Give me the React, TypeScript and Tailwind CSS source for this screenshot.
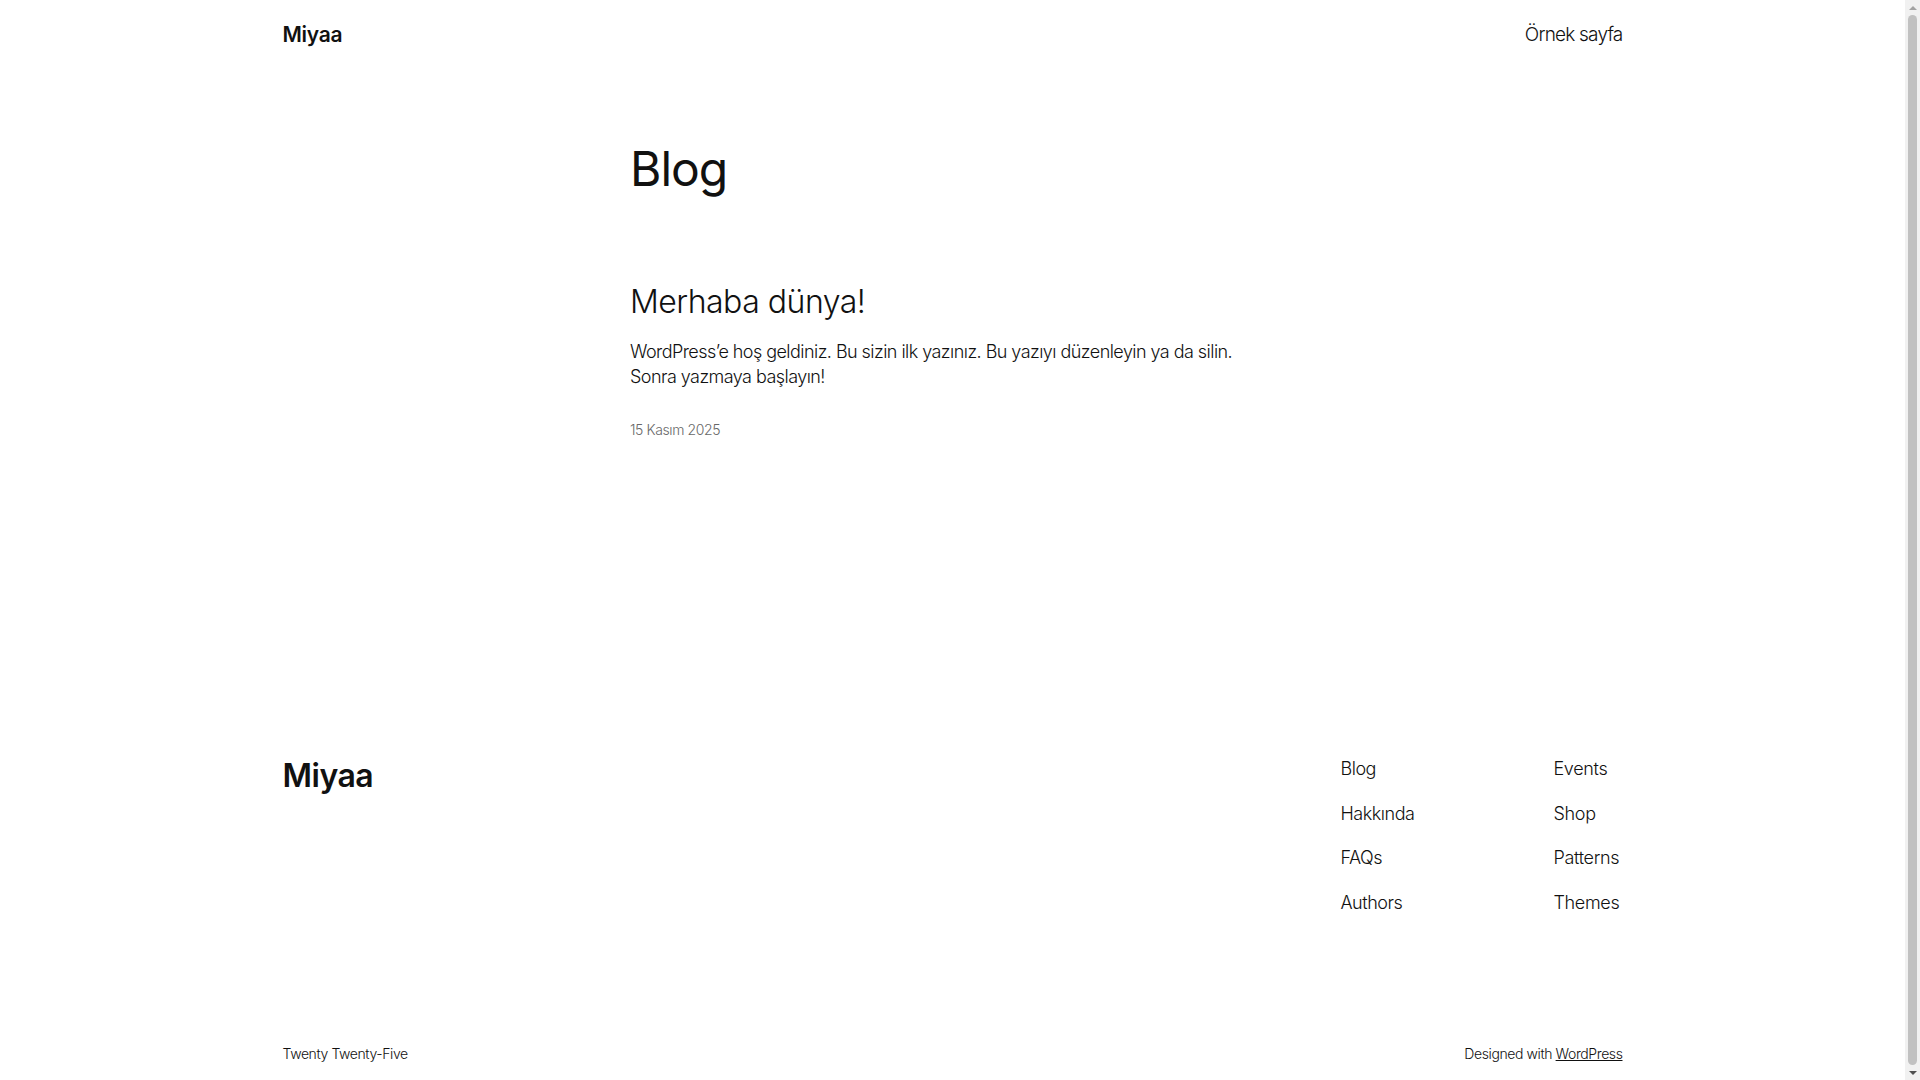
export default function App() {
  const navLeft = ["Blog", "Hakkında", "FAQs", "Authors"];
  const navRight = ["Events", "Shop", "Patterns", "Themes"];

  return (
    <div
      className="min-h-[1110px] w-[1905px] bg-white text-[#111111] flex flex-col"
      style={{ fontFamily: "Inter, 'Noto Sans', sans-serif" }}
    >
      {/* Header */}
      <header className="w-full max-w-[1340px] mx-auto flex items-center justify-between pt-[21px] pb-[19px]">
        <a className="text-[21px] leading-[28px] font-semibold tracking-[-0.3px]">Miyaa</a>
        <nav>
          <a className="text-[19px] leading-[28px] font-light tracking-[-0.8px]">Örnek sayfa</a>
        </nav>
      </header>

      {/* Main */}
      <main className="w-[645px] mx-auto pt-[74px]">
        <h1 className="text-[48px] leading-[54px] font-normal tracking-[-1px]">Blog</h1>

        <article className="mt-[88px]">
          <h2 className="text-[32px] leading-[36px] font-light tracking-[-0.5px]">
            Merhaba dünya!
          </h2>
          <p className="mt-[19px] text-[18px] leading-[25px] font-light tracking-[-0.55px]">
            WordPress’e hoş geldiniz. Bu sizin ilk yazınız. Bu yazıyı düzenleyin ya da silin. Sonra yazmaya başlayın!
          </p>
          <div className="mt-[31px] text-[14px] leading-[20px] font-light text-[#686868] tracking-[-0.4px]">
            15 Kasım 2025
          </div>
        </article>
      </main>

      {/* Footer */}
      <footer className="w-full max-w-[1340px] mx-auto mt-[316px]">
        <div className="flex justify-between">
          <div className="text-[32px] leading-[40px] font-semibold tracking-[-0.5px]">Miyaa</div>
          <div className="flex pr-[3px]">
            <ul className="w-[213px] flex flex-col gap-[18.5px]">
              {navLeft.map((n) => (
                <li key={n} className="text-[18px] leading-[26px] font-light tracking-[-0.45px]">
                  {n}
                </li>
              ))}
            </ul>
            <ul className="flex flex-col gap-[18.5px]">
              {navRight.map((n) => (
                <li key={n} className="text-[18px] leading-[26px] font-light tracking-[-0.3px]">
                  {n}
                </li>
              ))}
            </ul>
          </div>
        </div>
        <div className="flex justify-between items-center mt-[128px] pb-[50px] text-[14px] leading-[20px] font-light tracking-[-0.4px]">
          <span>Twenty Twenty-Five</span>
          <span>
            Designed with <a className="underline">WordPress</a>
          </span>
        </div>
      </footer>

      {/* Scrollbar */}
      <div className="fixed top-0 right-0 w-[15px] h-[1080px] bg-[#f1f1f1] flex flex-col items-center">
        <div className="h-[15px] w-full flex items-center justify-center">
          <div className="w-0 h-0 border-l-[4px] border-r-[4px] border-b-[4px] border-l-transparent border-r-transparent border-b-[#a3a3a3]" />
        </div>
        <div className="w-[9px] flex-1 rounded-full bg-[#c1c1c1]" />
        <div className="h-[15px] w-full flex items-center justify-center">
          <div className="w-0 h-0 border-l-[4px] border-r-[4px] border-t-[4px] border-l-transparent border-r-transparent border-t-[#505050]" />
        </div>
      </div>
    </div>
  );
}
